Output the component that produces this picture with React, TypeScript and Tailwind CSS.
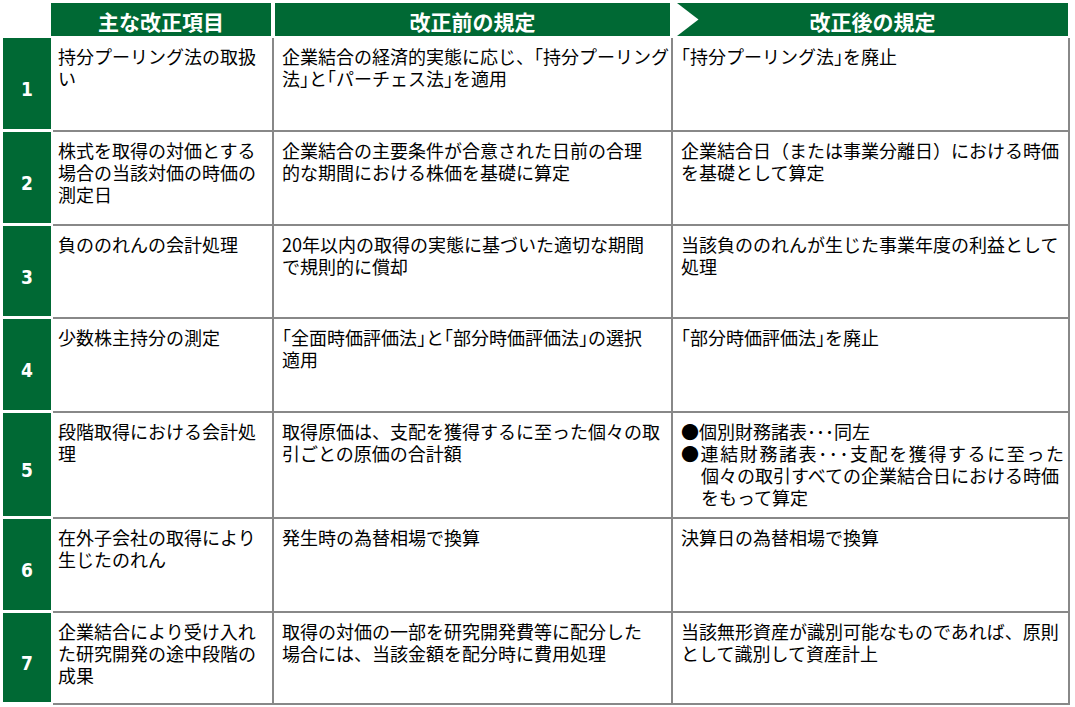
type Row = {
  n: string;
  h: string;
  nh: string;
  a: string[];
  b: string[];
  c: React.ReactNode;
};

// brackets in the source are set half-width
const fmt = (s: string) =>
  s.split(/([「」])/).map((p, i) =>
    p === "「" || p === "」" ? (
      <span key={i} className="[font-feature-settings:'halt']">
        {p}
      </span>
    ) : (
      p
    )
  );

const Lines = ({ lines }: { lines: string[] }) => (
  <>
    {lines.map((l, i) => (
      <div key={i}>{fmt(l)}</div>
    ))}
  </>
);

const rows: Row[] = [
  {
    n: "1",
    h: "h-[94px]",
    nh: "h-[91px]",
    a: ["持分プーリング法の取扱", "い"],
    b: ["企業結合の経済的実態に応じ、「持分プーリング", "法」と「パーチェス法」を適用"],
    c: <Lines lines={["「持分プーリング法」を廃止"]} />,
  },
  {
    n: "2",
    h: "h-[94px]",
    nh: "h-[91px]",
    a: ["株式を取得の対価とする", "場合の当該対価の時価の", "測定日"],
    b: ["企業結合の主要条件が合意された日前の合理", "的な期間における株価を基礎に算定"],
    c: <Lines lines={["企業結合日（または事業分離日）における時価", "を基礎として算定"]} />,
  },
  {
    n: "3",
    h: "h-[93px]",
    nh: "h-[90px]",
    a: ["負ののれんの会計処理"],
    b: ["20年以内の取得の実態に基づいた適切な期間", "で規則的に償却"],
    c: <Lines lines={["当該負ののれんが生じた事業年度の利益として", "処理"]} />,
  },
  {
    n: "4",
    h: "h-[94px]",
    nh: "h-[91px]",
    a: ["少数株主持分の測定"],
    b: ["「全面時価評価法」と「部分時価評価法」の選択", "適用"],
    c: <Lines lines={["「部分時価評価法」を廃止"]} />,
  },
  {
    n: "5",
    h: "h-[106px]",
    nh: "h-[103px]",
    a: ["段階取得における会計処", "理"],
    b: ["取得原価は、支配を獲得するに至った個々の取", "引ごとの原価の合計額"],
    c: (
      <>
        <div>●個別財務諸表･･･同左</div>
        <div className="tracking-[1.6px]">●連結財務諸表･･･支配を獲得するに至った</div>
        <div className="pl-[20px]">個々の取引すべての企業結合日における時価</div>
        <div className="pl-[20px]">をもって算定</div>
      </>
    ),
  },
  {
    n: "6",
    h: "h-[94px]",
    nh: "h-[91px]",
    a: ["在外子会社の取得により", "生じたのれん"],
    b: ["発生時の為替相場で換算"],
    c: <Lines lines={["決算日の為替相場で換算"]} />,
  },
  {
    n: "7",
    h: "h-[92px]",
    nh: "h-[89px]",
    a: ["企業結合により受け入れ", "た研究開発の途中段階の", "成果"],
    b: ["取得の対価の一部を研究開発費等に配分した", "場合には、当該金額を配分時に費用処理"],
    c: <Lines lines={["当該無形資産が識別可能なものであれば、原則", "として識別して資産計上"]} />,
  },
];

const cell =
  "border-b-2 border-r-2 border-[#888888] pt-[7px] text-[18px] leading-[22px] whitespace-nowrap text-black [text-spacing-trim:trim-start]";

export default function App() {
  return (
    <div className="w-[1075px] h-[707px] overflow-hidden bg-white pt-[3px] pl-[3px] font-['Noto_Sans_CJK_JP',sans-serif]">
      {/* header */}
      <div className="ml-[48px] flex h-[33px] text-[21px] font-bold leading-[33px] text-white">
        <div className="w-[220px] bg-[#006934] pt-[2px] text-center">主な改正項目</div>
        <div className="ml-[4px] w-[395px] bg-[#006934] pt-[2px] text-center">改正前の規定</div>
        <div className="relative ml-[7px] w-[391px] bg-[#006934] pt-[2px] text-center">
          <svg className="absolute left-0 top-0" width="22" height="33" viewBox="0 0 22 33">
            <polygon points="0,0 21.5,16.5 0,33" fill="#ffffff" />
          </svg>
          改正後の規定
        </div>
      </div>

      <div className="mt-[2px]">
        {rows.map((r) => (
          <div key={r.n} className={`flex ${r.h}`}>
            <div
              className={`w-[48px] ${r.nh} flex items-center justify-center bg-[#006934] pt-[12px] font-['Liberation_Sans_Narrow','DejaVu_Sans_Condensed',sans-serif] text-[19px] font-bold text-white`}
            >
              {r.n}
            </div>
            <div className={`ml-[2px] w-[221px] pl-[5px] ${cell}`}>
              <Lines lines={r.a} />
            </div>
            <div className={`w-[399px] pl-[8px] ${cell}`}>
              <Lines lines={r.b} />
            </div>
            <div className={`w-[397px] pl-[8px] ${cell}`}>{r.c}</div>
          </div>
        ))}
      </div>
    </div>
  );
}
